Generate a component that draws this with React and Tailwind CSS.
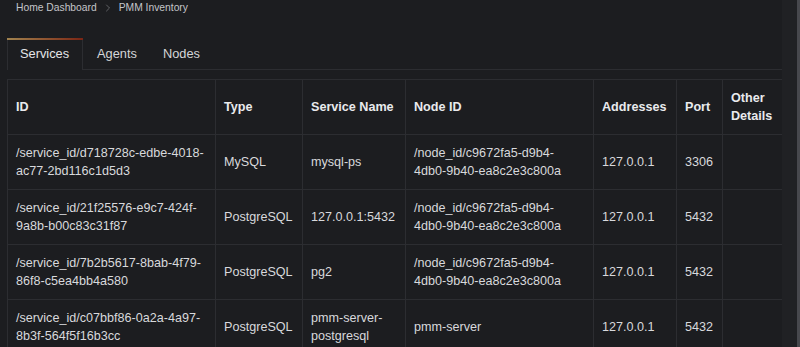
import { ChevronRight } from "lucide-react";

const columns = [
  { label: "ID", width: "w-[208px]" },
  { label: "Type", width: "w-[87px]" },
  { label: "Service Name", width: "w-[103px]" },
  { label: "Node ID", width: "w-[188px]" },
  { label: "Addresses", width: "w-[83px]" },
  { label: "Port", width: "w-[46px]" },
  { label: "Other Details", width: "w-[60px]" },
];

const rows = [
  ["/service_id/d718728c-edbe-4018-ac77-2bd116c1d5d3", "MySQL", "mysql-ps", "/node_id/c9672fa5-d9b4-4db0-9b40-ea8c2e3c800a", "127.0.0.1", "3306", ""],
  ["/service_id/21f25576-e9c7-424f-9a8b-b00c83c31f87", "PostgreSQL", "127.0.0.1:5432", "/node_id/c9672fa5-d9b4-4db0-9b40-ea8c2e3c800a", "127.0.0.1", "5432", ""],
  ["/service_id/7b2b5617-8bab-4f79-86f8-c5ea4bb4a580", "PostgreSQL", "pg2", "/node_id/c9672fa5-d9b4-4db0-9b40-ea8c2e3c800a", "127.0.0.1", "5432", ""],
  ["/service_id/c07bbf86-0a2a-4a97-8b3f-564f5f16b3cc", "PostgreSQL", "pmm-server-postgresql", "pmm-server", "127.0.0.1", "5432", ""],
];

export default function App() {
  return (
    <div className="flex h-[347px] w-[800px] overflow-hidden bg-[#1c1d20] font-['Liberation_Sans',Arial,sans-serif]">
      <div className="w-[782px] shrink-0">
        {/* breadcrumb */}
        <div className="flex h-[15px] items-center pl-[16px] text-[10.3px] text-[#c4c5c9]">
          <span>Home Dashboard</span>
          <ChevronRight className="mx-[5px] h-[12px] w-[12px] text-[#77787c]" strokeWidth={1.5} />
          <span>PMM Inventory</span>
        </div>

        {/* tabs */}
        <div className="mt-[23px] flex h-[32px] pl-[7px] text-[12.8px]">
          <div className="relative flex items-center border-x border-[#2c2d31] pl-[12px] pr-[13px] text-[#e4e5e8]">
            <div className="absolute left-[-1px] right-[-1px] top-0 h-[2px] bg-gradient-to-r from-[#a0834f] to-[#7a2414]" />
            Services
          </div>
          <div className="flex items-center border-b border-[#2c2d31] pl-[14px] pr-[13px] text-[#d4d5d8]">Agents</div>
          <div className="flex items-center border-b border-[#2c2d31] pl-[13px] pr-[12px] text-[#d4d5d8]">Nodes</div>
          <div className="flex-1 border-b border-[#2c2d31]" />
        </div>

        {/* table */}
        <div className="pl-[7px] pt-[9px]">
          <table className="w-[775px] table-fixed border-collapse text-[12.6px] leading-[18px] text-[#d8d9dc]">
            <thead>
              <tr>
                {columns.map((c) => (
                  <th
                    key={c.label}
                    className={`${c.width} h-[55px] border border-[#2c2d31] py-[9px] pl-[8px] pr-[9px] text-left align-middle font-bold text-[#e9eaed]`}
                  >
                    {c.label}
                  </th>
                ))}
              </tr>
            </thead>
            <tbody>
              {rows.map((r, i) => (
                <tr key={i}>
                  {r.map((v, j) => (
                    <td key={j} className="h-[55px] border border-[#2c2d31] py-[9px] pl-[8px] pr-[9px] align-middle">
                      {v}
                    </td>
                  ))}
                </tr>
              ))}
            </tbody>
          </table>
        </div>
      </div>
      <div className="flex-1 bg-[#202124]" />
      <div className="w-[3px] bg-[#47484d]" />
    </div>
  );
}
